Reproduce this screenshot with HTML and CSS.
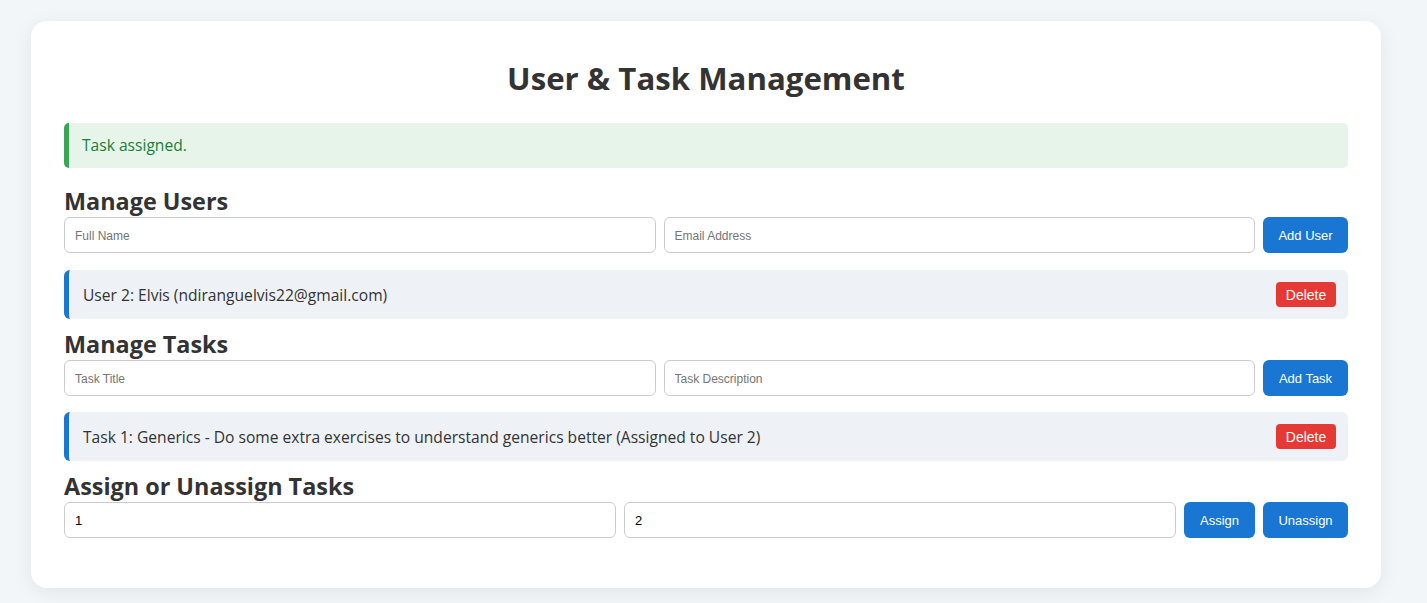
FILE: index.html
```html
<!DOCTYPE html>
<html lang="en">
<head>
<meta charset="utf-8">
<title>User &amp; Task Management</title>
<link rel="stylesheet" href="styles.css">
</head>
<body>
<div class="card">
  <h1 class="title">User &amp; Task Management</h1>
  <div class="alert">Task assigned.</div>

  <h2 class="section">Manage Users</h2>
  <div class="form-row">
    <input class="field" type="text" placeholder="Full Name">
    <input class="field" type="text" placeholder="Email Address">
    <button class="btn">Add User</button>
  </div>
  <div class="item">
    <span class="item-text">User 2: Elvis (ndiranguelvis22@gmail.com)</span>
    <button class="btn-del">Delete</button>
  </div>

  <h2 class="section">Manage Tasks</h2>
  <div class="form-row">
    <input class="field" type="text" placeholder="Task Title">
    <input class="field" type="text" placeholder="Task Description">
    <button class="btn">Add Task</button>
  </div>
  <div class="item item-task">
    <span class="item-text">Task 1: Generics - Do some extra exercises to understand generics better (Assigned to User 2)</span>
    <button class="btn-del">Delete</button>
  </div>

  <h2 class="section">Assign or Unassign Tasks</h2>
  <div class="form-row">
    <input class="field" type="text" value="1">
    <input class="field" type="text" value="2">
    <button class="btn btn-assign">Assign</button>
    <button class="btn">Unassign</button>
  </div>
</div>
</body>
</html>
```
FILE: styles.css
```css
html, body {
  margin: 0;
  padding: 0;
}
body {
  background: #f3f6f9;
  font-family: "Open Sans", "Noto Sans", sans-serif;
  color: #333;
  width: 1427px;
  height: 603px;
  overflow: hidden;
}
.card {
  box-sizing: border-box;
  width: 1350px;
  margin: 21px 0 0 31px;
  background: #fff;
  border-radius: 16px;
  box-shadow: 0 4px 20px rgba(0, 0, 0, 0.07);
  padding: 33px 33px 50px 33px;
}
.title {
  margin: 0 0 21px 0;
  font-size: 31.2px;
  line-height: 48px;
  font-weight: 700;
  text-align: center;
  color: #333;
}
.alert {
  box-sizing: border-box;
  height: 45px;
  background: #e6f4ea;
  border-left: 5px solid #34a853;
  border-radius: 5px;
  color: #188038;
  font-size: 15.6px;
  line-height: 45px;
  padding-left: 13px;
  margin-bottom: 17px;
}
.section {
  margin: 0;
  font-size: 23.4px;
  line-height: 32px;
  font-weight: 700;
  color: #333;
}
.form-row {
  display: flex;
  gap: 8px;
  height: 36px;
}
.field {
  flex: 1;
  box-sizing: border-box;
  height: 36px;
  min-width: 0;
  border: 1px solid #ccc;
  border-radius: 6px;
  padding: 0 10px;
  font-family: "Liberation Sans", Arial, sans-serif;
  font-size: 13px;
  color: #000;
  background: #fff;
}
.field::placeholder {
  color: #757575;
  font-size: 12px;
}
.btn {
  box-sizing: border-box;
  height: 36px;
  width: 85px;
  border: none;
  border-radius: 6px;
  background: #1976d2;
  color: #fff;
  font-family: "Liberation Sans", Arial, sans-serif;
  font-size: 13px;
  padding: 0;
}
.btn-assign {
  width: 71px;
}
.item {
  box-sizing: border-box;
  height: 49px;
  margin: 17px 0 9px 0;
  background: #eef1f5;
  border-left: 5px solid #1976d2;
  border-radius: 6px;
  display: flex;
  align-items: center;
  justify-content: space-between;
  padding: 0 12px 0 14px;
}
.item-task {
  margin-top: 16px;
}
.item-text {
  font-size: 15.6px;
  color: #333;
}
.btn-del {
  height: 25px;
  width: 60px;
  border: none;
  border-radius: 4px;
  background: #e53935;
  color: #fff;
  font-family: "Liberation Sans", Arial, sans-serif;
  font-size: 14px;
  padding: 0;
}
```
